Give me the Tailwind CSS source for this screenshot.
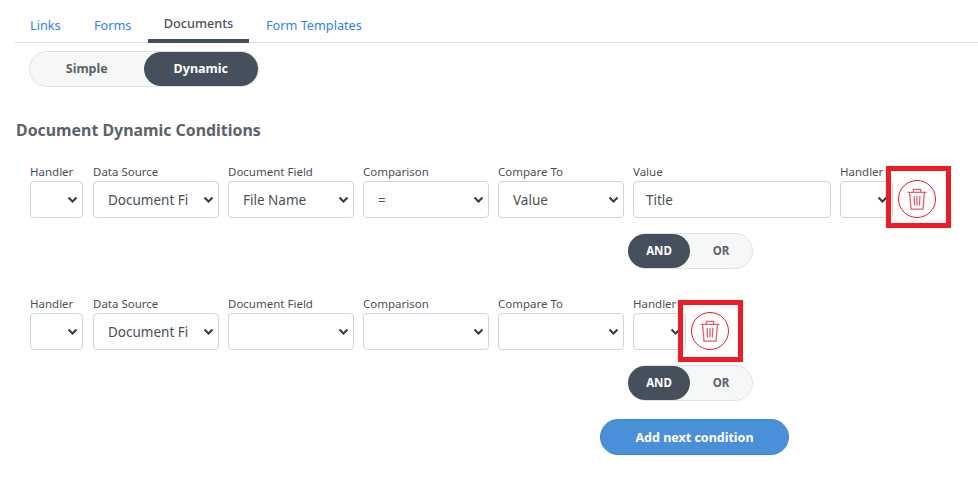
<!DOCTYPE html>
<html>
<head>
<meta charset="utf-8">
<script src="https://cdn.jsdelivr.net/npm/@tailwindcss/browser@4"></script>
</head>
<body class="bg-white font-['Noto_Sans','Open_Sans',sans-serif] text-[#495057] w-[978px] h-[489px] overflow-hidden">
<div class="pl-[14px]">
  <nav class="flex items-stretch h-[35px] mt-[8px] border-b border-[#dee2e6] text-[12.7px] text-[#2f7ff5]">
    <a class="w-[62px] pl-[16px] pt-[8px]">Links</a>
    <a class="w-[72px] pl-[18px] pt-[8px]">Forms</a>
    <a class="w-[101px] h-[35px] text-center pt-[6px] border-b-4 border-[#45505c] text-[#495057] font-medium">Documents</a>
    <a class="pl-[17px] pt-[8px]">Form Templates</a>
  </nav>
  <div class="ml-[15px] mt-[8px] w-[230px] h-[36px] flex rounded-full border border-[#dee2e6] bg-[#f6f7f7] text-[12.5px] font-bold">
    <div class="w-[114px] text-center leading-[33px] text-[#5b626a]">Simple</div>
    <div class="w-[115px] text-center leading-[34px] rounded-full bg-[#45505c] text-white">Dynamic</div>
  </div>
  <h2 class="ml-[2px] mt-[31px] text-[15.9px] leading-[24px] font-bold text-[#5b626a]">Document Dynamic Conditions</h2>

  <div class="ml-[16px] mt-[21px] flex gap-[9px] text-[11.5px] leading-[18px]">
    <div class="w-[53px] mr-[1px]"><div class="whitespace-nowrap">Handler</div><div class="h-[37px] flex items-center justify-end pr-[4px] border border-[#ced4da] rounded"><svg class="w-[11px] h-[8px]" viewBox="0 0 11 8" fill="none" stroke="#343a40" stroke-width="2"><path d="M1.5 1.5 5.5 5.5 9.5 1.5"/></svg></div></div>
    <div class="w-[126px]"><div>Data Source</div><div class="h-[37px] flex items-center justify-between pl-[14px] pr-[4px] border border-[#ced4da] rounded text-[13.5px]"><span class="w-[82px] overflow-hidden whitespace-nowrap">Document Fi</span><svg class="w-[11px] h-[8px]" viewBox="0 0 11 8" fill="none" stroke="#343a40" stroke-width="2"><path d="M1.5 1.5 5.5 5.5 9.5 1.5"/></svg></div></div>
    <div class="w-[126px]"><div>Document Field</div><div class="h-[37px] flex items-center justify-between pl-[14px] pr-[4px] border border-[#ced4da] rounded text-[13.5px]"><span>File Name</span><svg class="w-[11px] h-[8px]" viewBox="0 0 11 8" fill="none" stroke="#343a40" stroke-width="2"><path d="M1.5 1.5 5.5 5.5 9.5 1.5"/></svg></div></div>
    <div class="w-[126px]"><div>Comparison</div><div class="h-[37px] flex items-center justify-between pl-[14px] pr-[4px] border border-[#ced4da] rounded text-[13.5px]"><span>=</span><svg class="w-[11px] h-[8px]" viewBox="0 0 11 8" fill="none" stroke="#343a40" stroke-width="2"><path d="M1.5 1.5 5.5 5.5 9.5 1.5"/></svg></div></div>
    <div class="w-[126px]"><div>Compare To</div><div class="h-[37px] flex items-center justify-between pl-[14px] pr-[4px] border border-[#ced4da] rounded text-[13.5px]"><span>Value</span><svg class="w-[11px] h-[8px]" viewBox="0 0 11 8" fill="none" stroke="#343a40" stroke-width="2"><path d="M1.5 1.5 5.5 5.5 9.5 1.5"/></svg></div></div>
    <div class="w-[198px]"><div>Value</div><div class="h-[37px] flex items-center pl-[12px] border border-[#ced4da] rounded text-[13.5px]">Title</div></div>
    <div class="w-[53px]"><div class="whitespace-nowrap">Handler</div><div class="h-[37px] flex items-center justify-end pr-[4px] border border-[#ced4da] rounded"><svg class="w-[11px] h-[8px]" viewBox="0 0 11 8" fill="none" stroke="#343a40" stroke-width="2"><path d="M1.5 1.5 5.5 5.5 9.5 1.5"/></svg></div></div>
    <div class="relative w-[38px] h-[38px] mt-[17px] -ml-[4px] bg-white rounded-full border border-[#ed1c24] flex items-center justify-center">
      <svg class="w-[24px] h-[24px]" viewBox="0 0 20 20" fill="none" stroke="#e0636a" stroke-width="1.1"><path d="M2 4.5H18M7 4.5V2H13V4.5M3.8 4.5 5 18.5H15L16.2 4.5M7.6 7.5 8 15.5M10 7.5V15.5M12.4 7.5 12 15.5"/></svg>
      <div class="absolute left-[-13px] top-[-15px] w-[65px] h-[62px] border-[5px] border-[#ed1c24]"></div>
    </div>
  </div>

  <div class="ml-[614px] mt-[15px] w-[125px] h-[36px] flex rounded-full border border-[#dee2e6] bg-[#f6f7f7] text-[11.5px] font-bold">
    <div class="w-[62px] -ml-[1px] text-center leading-[34px] rounded-full bg-[#45505c] text-white">AND</div>
    <div class="flex-1 text-center leading-[33px] text-[#5b626a]">OR</div>
  </div>

  <div class="ml-[16px] mt-[26px] flex gap-[9px] text-[11.5px] leading-[18px]">
    <div class="w-[53px] mr-[1px]"><div class="whitespace-nowrap">Handler</div><div class="h-[37px] flex items-center justify-end pr-[4px] border border-[#ced4da] rounded"><svg class="w-[11px] h-[8px]" viewBox="0 0 11 8" fill="none" stroke="#343a40" stroke-width="2"><path d="M1.5 1.5 5.5 5.5 9.5 1.5"/></svg></div></div>
    <div class="w-[126px]"><div>Data Source</div><div class="h-[37px] flex items-center justify-between pl-[14px] pr-[4px] border border-[#ced4da] rounded text-[13.5px]"><span class="w-[82px] overflow-hidden whitespace-nowrap">Document Fi</span><svg class="w-[11px] h-[8px]" viewBox="0 0 11 8" fill="none" stroke="#343a40" stroke-width="2"><path d="M1.5 1.5 5.5 5.5 9.5 1.5"/></svg></div></div>
    <div class="w-[126px]"><div>Document Field</div><div class="h-[37px] flex items-center justify-end pr-[4px] border border-[#ced4da] rounded"><svg class="w-[11px] h-[8px]" viewBox="0 0 11 8" fill="none" stroke="#343a40" stroke-width="2"><path d="M1.5 1.5 5.5 5.5 9.5 1.5"/></svg></div></div>
    <div class="w-[126px]"><div>Comparison</div><div class="h-[37px] flex items-center justify-end pr-[4px] border border-[#ced4da] rounded"><svg class="w-[11px] h-[8px]" viewBox="0 0 11 8" fill="none" stroke="#343a40" stroke-width="2"><path d="M1.5 1.5 5.5 5.5 9.5 1.5"/></svg></div></div>
    <div class="w-[126px]"><div>Compare To</div><div class="h-[37px] flex items-center justify-end pr-[4px] border border-[#ced4da] rounded"><svg class="w-[11px] h-[8px]" viewBox="0 0 11 8" fill="none" stroke="#343a40" stroke-width="2"><path d="M1.5 1.5 5.5 5.5 9.5 1.5"/></svg></div></div>
    <div class="w-[53px]"><div class="whitespace-nowrap">Handler</div><div class="h-[37px] flex items-center justify-end pr-[4px] border border-[#ced4da] rounded"><svg class="w-[11px] h-[8px]" viewBox="0 0 11 8" fill="none" stroke="#343a40" stroke-width="2"><path d="M1.5 1.5 5.5 5.5 9.5 1.5"/></svg></div></div>
    <div class="relative w-[38px] h-[38px] mt-[17px] -ml-[4px] bg-white rounded-full border border-[#ed1c24] flex items-center justify-center">
      <svg class="w-[24px] h-[24px]" viewBox="0 0 20 20" fill="none" stroke="#e0636a" stroke-width="1.1"><path d="M2 4.5H18M7 4.5V2H13V4.5M3.8 4.5 5 18.5H15L16.2 4.5M7.6 7.5 8 15.5M10 7.5V15.5M12.4 7.5 12 15.5"/></svg>
      <div class="absolute left-[-14px] top-[-13px] w-[65px] h-[62px] border-[5px] border-[#ed1c24]"></div>
    </div>
  </div>

  <div class="ml-[614px] mt-[15px] w-[125px] h-[36px] flex rounded-full border border-[#dee2e6] bg-[#f6f7f7] text-[11.5px] font-bold">
    <div class="w-[62px] -ml-[1px] text-center leading-[34px] rounded-full bg-[#45505c] text-white">AND</div>
    <div class="flex-1 text-center leading-[33px] text-[#5b626a]">OR</div>
  </div>
  <div class="ml-[586px] mt-[18px] w-[189px] h-[36px] rounded-full bg-[#4a90d9] border border-[#3f86d0] text-white text-[12.5px] font-bold text-center leading-[36px]">Add next condition</div>
</div>
</body>
</html>
